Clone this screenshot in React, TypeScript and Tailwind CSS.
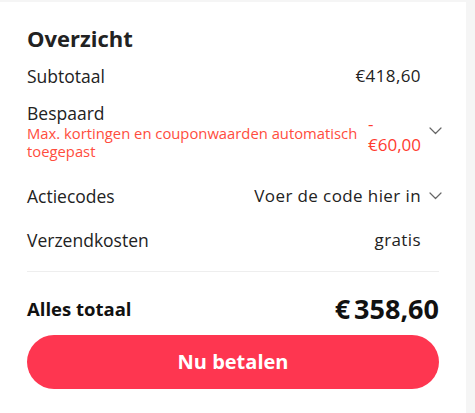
const font = { fontFamily: '"Open Sans", "Noto Sans", sans-serif' };

function Chevron() {
  return (
    <svg width="13" height="8" viewBox="0 0 13 8" fill="none" className="ml-[8px] -mr-[3px]">
      <polyline points="1,1 6.5,6.5 12,1" stroke="#666" strokeWidth="1.2" strokeLinecap="round" strokeLinejoin="round" />
    </svg>
  );
}

function Row({ label, value, chevron }: { label: string; value: string; chevron?: boolean }) {
  return (
    <div className="flex items-center justify-between h-[44px]">
      <span className="text-[17.5px] text-[#222]">{label}</span>
      <div className="flex items-center">
        <span className="text-[17px] text-[#222] tracking-[0.4px]">{value}</span>
        {chevron ? <Chevron /> : <span className="w-[18px]" />}
      </div>
    </div>
  );
}

export default function App() {
  return (
    <div className="w-[475px] h-[413px] bg-[#f5f5f5] pt-[2px]" style={font}>
      <div className="w-[466px] h-[411px] bg-white px-[27px] pt-[21px]">
        <h2 className="text-[22px] font-bold text-[#222] leading-[30px]">Overzicht</h2>

        <div className="mt-[1px]">
          <Row label="Subtotaal" value="€418,60" />
        </div>

        <div className="flex items-center justify-between mt-[4px]">
          <div className="flex flex-col w-[338px]">
            <span className="text-[17.5px] text-[#222] leading-[22px]">Bespaard</span>
            <span className="text-[14.8px] text-[#ff4d3d] leading-[18px]">
              Max. kortingen en couponwaarden automatisch toegepast
            </span>
          </div>
          <div className="flex items-center">
            <div className="flex flex-col items-start text-[17px] text-[#ff3b30] leading-[21px] mt-[6px]">
              <span>-</span>
              <span>€60,00</span>
            </div>
            <Chevron />
          </div>
        </div>

        <div className="mt-[14px]">
          <Row label="Actiecodes" value="Voer de code hier in" chevron />
          <Row label="Verzendkosten" value="gratis" />
        </div>

        <div className="h-px bg-[#eeeeee] mt-[9px]" />

        <div className="flex items-center justify-between mt-[22px]">
          <span className="text-[18.5px] font-bold text-[#111]">Alles totaal</span>
          <span className="text-[27px] font-bold text-[#111] leading-[30px]">
            €<span className="ml-[4px]">358,60</span>
          </span>
        </div>

        <button className="mt-[11px] w-full h-[54px] rounded-full bg-[#fe3650] text-white text-[20px] font-bold">
          Nu betalen
        </button>
      </div>
    </div>
  );
}
